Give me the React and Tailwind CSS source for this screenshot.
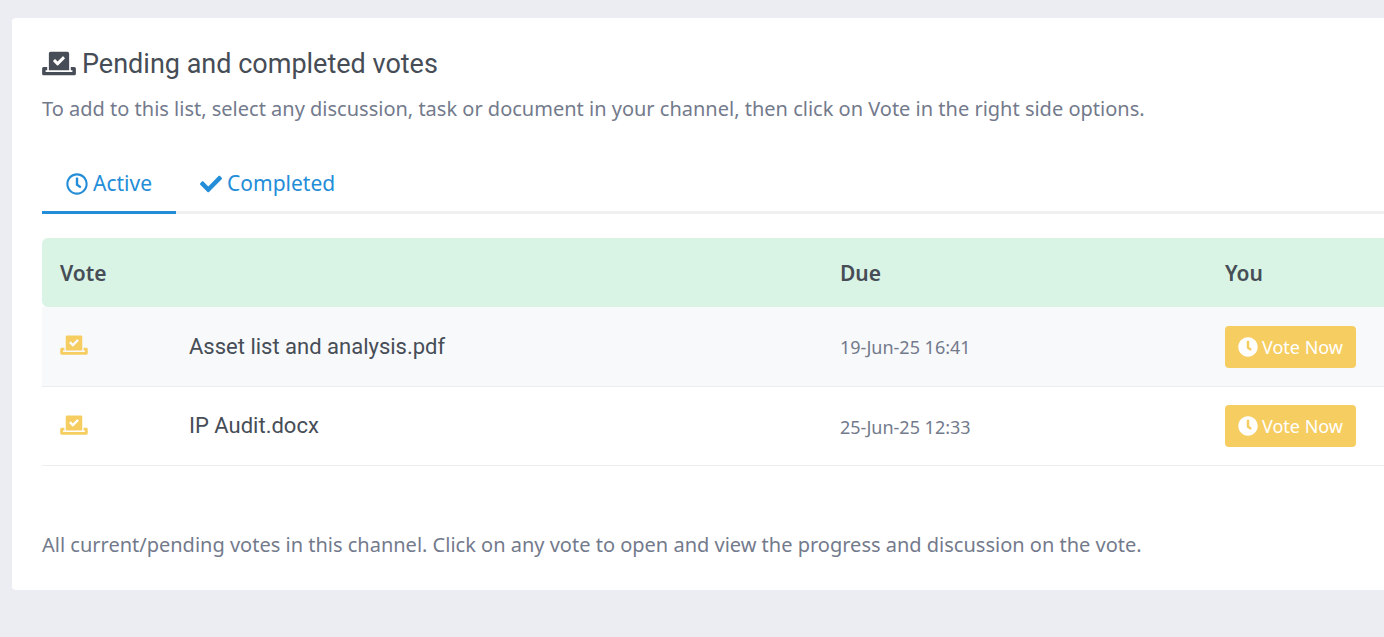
import React, { useState } from 'react';
import { FaCheck, FaClock, FaRegClock, FaVoteYea } from 'react-icons/fa';

const votes = [
    { id: 1, name: 'Asset list and analysis.pdf', due: '19-Jun-25 16:41' },
    { id: 2, name: 'IP Audit.docx', due: '25-Jun-25 12:33' },
];

const tabs = [
    { id: 'active', label: 'Active', Icon: FaRegClock },
    { id: 'completed', label: 'Completed', Icon: FaCheck },
];

function VoteRow({ vote }) {
    return (
        <tr className="h-[79px] border-b border-[#ebedef] odd:bg-[#f8f9fb]">
            <td className="pb-0.5 pl-[18px]">
                <FaVoteYea className="h-[22px] w-7 text-[#f6cd61]" />
            </td>
            <td className="pl-[18px] font-['Roboto',sans-serif] text-[22px] text-[#464d56]">{vote.name}</td>
            <td className="pl-[18px] pt-0.5 text-lg">{vote.due}</td>
            <td className="pl-[18px] pt-px">
                <button className="flex h-[42px] items-center gap-1 whitespace-nowrap rounded bg-[#f6cd61] px-[13px] text-lg text-white">
                    <FaClock className="size-5" />
                    Vote Now
                </button>
            </td>
        </tr>
    );
}

export default function App() {
    const [activeTab, setActiveTab] = useState('active');
    const rows = activeTab === 'active' ? votes : [];

    return (
        <div className="min-h-screen bg-[#ecedf2] pl-3 pt-[18px] font-['Noto_Sans',sans-serif] text-[#737a8c]">
            <div className="rounded-l bg-white pb-7 pl-[30px] pt-7">
                <h1 className="flex items-center gap-1.5 font-['Roboto',sans-serif] text-[27px] leading-9 text-[#464d56]">
                    <FaVoteYea className="mb-0.5 h-[27px] w-[34px]" />
                    Pending and completed votes
                </h1>
                <p className="mt-2.5 text-xl leading-[34px]">
                    To add to this list, select any discussion, task or document in your channel, then click on Vote in the right side options.
                </p>

                <div role="tablist" className="mt-7 flex border-b-3 border-[#f0f0f0]">
                    {tabs.map(({ id, label, Icon }) => (
                        <button
                            key={id}
                            role="tab"
                            aria-selected={activeTab === id}
                            onClick={() => setActiveTab(id)}
                            className={`-mb-[3px] flex h-[60px] items-center gap-[5px] border-b-3 px-6 pt-[3px] text-[21px] text-[#248dd8] ${activeTab === id ? 'border-[#248dd8]' : 'border-transparent'}`}
                        >
                            <Icon className="size-[22px]" />
                            {label}
                        </button>
                    ))}
                </div>

                <table className="mt-6 w-full table-fixed border-collapse text-left">
                    <colgroup>
                        <col className="w-[129px]" />
                        <col />
                        <col className="w-[385px]" />
                        <col className="w-[177px]" />
                    </colgroup>
                    <thead>
                        <tr className="h-[69px] text-[21px] text-[#464d56]">
                            <th colSpan={2} className="rounded-l-md bg-[#d9f3e4] pl-[18px] pt-0.5 font-semibold">Vote</th>
                            <th className="bg-[#d9f3e4] pl-[18px] pt-0.5 font-semibold">Due</th>
                            <th className="bg-[#d9f3e4] pl-[18px] pt-0.5 font-semibold">You</th>
                        </tr>
                    </thead>
                    <tbody>
                        {rows.map((vote) => (
                            <VoteRow key={vote.id} vote={vote} />
                        ))}
                    </tbody>
                </table>

                <p className="mt-[62px] text-xl leading-[34px]">
                    All current/pending votes in this channel. Click on any vote to open and view the progress and discussion on the vote.
                </p>
            </div>
        </div>
    );
}
